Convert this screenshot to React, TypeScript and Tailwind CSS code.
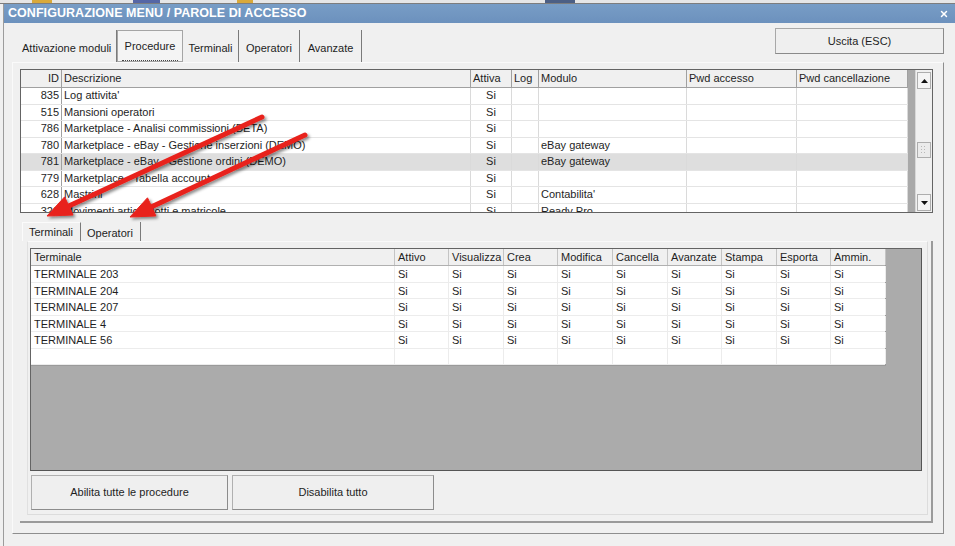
import { X } from 'lucide-react'

const topCols = [
  { label: 'ID', w: 41, align: 'text-right' },
  { label: 'Descrizione', w: 409, align: 'text-left' },
  { label: 'Attiva', w: 41, align: 'text-center' },
  { label: 'Log', w: 27, align: 'text-left' },
  { label: 'Modulo', w: 148, align: 'text-left' },
  { label: 'Pwd accesso', w: 110, align: 'text-left' },
  { label: 'Pwd cancellazione', w: 111, align: 'text-left' },
]

const topRows = [
  ['835', "Log attivita'", 'Si', '', '', '', ''],
  ['515', 'Mansioni operatori', 'Si', '', '', '', ''],
  ['786', 'Marketplace - Analisi commissioni (BETA)', 'Si', '', '', '', ''],
  ['780', 'Marketplace - eBay - Gestione inserzioni (DEMO)', 'Si', '', 'eBay gateway', '', ''],
  ['781', 'Marketplace - eBay - Gestione ordini (DEMO)', 'Si', '', 'eBay gateway', '', ''],
  ['779', 'Marketplace - Tabella account', 'Si', '', '', '', ''],
  ['628', 'Mastrini', 'Si', '', "Contabilita'", '', ''],
  ['320', 'Movimenti articoli lotti e matricole', 'Si', '', 'Ready Pro', '', ''],
]

const permCols = [
  { label: 'Terminale', w: 364 },
  { label: 'Attivo', w: 54 },
  { label: 'Visualizza', w: 55 },
  { label: 'Crea', w: 54 },
  { label: 'Modifica', w: 55 },
  { label: 'Cancella', w: 55 },
  { label: 'Avanzate', w: 54 },
  { label: 'Stampa', w: 55 },
  { label: 'Esporta', w: 54 },
  { label: 'Ammin.', w: 55 },
]

const terminals = ['TERMINALE 203', 'TERMINALE 204', 'TERMINALE 207', 'TERMINALE 4', 'TERMINALE 56', '']

function MainTabs() {
  return (
    <div className="flex h-[32px] mt-[2px] text-[11px] text-[#1e1e1e]">
      <div className="w-[100px] flex items-center pt-[4px] pl-[5px] border-r border-[#7a7a7a]">Attivazione moduli</div>
      <div className="w-[66px] flex items-center justify-center pt-[2px] border border-[#a5a5a5] bg-[#f4f4f4]">
        <div className="px-[3px] py-[5px] border-b border-dotted border-[#444]">Procedure</div>
      </div>
      <div className="w-[56px] flex items-center justify-center pt-[4px] border-r border-[#7a7a7a]">Terminali</div>
      <div className="w-[61px] flex items-center justify-center pt-[4px] border-r border-[#7a7a7a]">Operatori</div>
      <div className="w-[62px] flex items-center justify-center pt-[4px] border-r border-[#7a7a7a]">Avanzate</div>
    </div>
  )
}

function ScrollBar() {
  return (
    <div className="w-[17px] flex flex-col bg-[#f0f0f0] border-l border-[#d8d8d8]">
      <div className="h-[17px] mt-[2px] mx-[1px] border border-[#adadad] bg-[#f4f4f4] flex items-center justify-center">
        <svg width="7" height="4" viewBox="0 0 7 4"><path d="M0 4 L3.5 0 L7 4 Z" fill="#111" /></svg>
      </div>
      <div className="h-[53px]" />
      <div className="h-[16px] mx-[1px] border border-[#adadad] bg-[#ebebeb] flex items-center justify-center">
        <svg width="6" height="8" viewBox="0 0 6 8">
          {[0, 3, 6].map(y => [0, 3].map(x => <rect key={`${x}-${y}`} x={x} y={y} width="1" height="1" fill="#b8b8b8" />))}
        </svg>
      </div>
      <div className="flex-1" />
      <div className="h-[17px] mb-[1px] mx-[1px] border border-[#adadad] bg-[#f4f4f4] flex items-center justify-center">
        <svg width="7" height="4" viewBox="0 0 7 4"><path d="M0 0 L3.5 4 L7 0 Z" fill="#111" /></svg>
      </div>
    </div>
  )
}

function ProcedureGrid() {
  return (
    <div className="h-[144px] flex border border-[#646464] bg-[#a9a9a9] overflow-hidden text-[11px] text-[#1e1e1e]">
      <div className="w-[887px] flex flex-col bg-white">
        <div className="flex h-[18px] bg-[#f0f0f0] border-b border-[#a0a0a0]">
          {topCols.map(c => (
            <div key={c.label} style={{ width: c.w }} className={`shrink-0 px-[2px] leading-[17px] border-r border-[#a0a0a0] ${c.align === 'text-right' ? 'text-right' : 'text-left'}`}>
              {c.label}
            </div>
          ))}
        </div>
        {topRows.map((r, i) => (
          <div key={r[0]} className={`flex h-[16.5px] shrink-0 border-b border-[#e4e4e4] ${i === 4 ? 'bg-[#dedede]' : ''}`}>
            {topCols.map((c, j) => (
              <div key={j} style={{ width: c.w }} className={`shrink-0 px-[2px] leading-[15.5px] whitespace-nowrap overflow-hidden border-r ${j === 0 ? 'border-[#a0a0a0]' : 'border-[#dadada]'} ${c.align === 'text-right' ? 'text-right' : c.align === 'text-center' ? 'text-center' : 'text-left'}`}>
                {r[j]}
              </div>
            ))}
          </div>
        ))}
      </div>
      <div className="w-[7px] bg-[#a9a9a9]" />
      <ScrollBar />
    </div>
  )
}

function PermissionGrid() {
  return (
    <div className="h-[223px] border border-[#646464] border-r-[#555] border-b-[#555] bg-[#ababab] text-[11px] text-[#1e1e1e]">
      <div className="w-[855px] bg-white border-r border-b border-[#9a9a9a]">
        <div className="flex h-[17px] bg-[#f0f0f0] border-b border-[#b0b0b0]">
          {permCols.map(c => (
            <div key={c.label} style={{ width: c.w }} className="shrink-0 px-[3px] leading-[17px] border-r border-[#c4c4c4]">
              {c.label}
            </div>
          ))}
        </div>
        {terminals.map((t, i) => (
          <div key={i} className="flex h-[16.5px] border-b border-[#ececec]">
            {permCols.map((c, j) => (
              <div key={c.label} style={{ width: c.w }} className="shrink-0 px-[3px] leading-[16px] border-r border-[#ececec]">
                {t === '' ? '' : j === 0 ? t : 'Si'}
              </div>
            ))}
          </div>
        ))}
      </div>
    </div>
  )
}

function Arrows() {
  return (
    <svg className="absolute left-0 top-0 pointer-events-none" width="955" height="546" viewBox="0 0 955 546">
      <defs>
        <filter id="sh" x="-20%" y="-20%" width="140%" height="140%">
          <feDropShadow dx="2" dy="2" stdDeviation="1.5" floodColor="#000" floodOpacity="0.45" />
        </filter>
      </defs>
      <g filter="url(#sh)" fill="#e8211b" stroke="#e8211b">
        <line x1="262" y1="117" x2="68.8" y2="206" strokeWidth="5" strokeLinecap="round" />
        <polygon points="47,216 73,215 64.6,196.9" strokeWidth="1" strokeLinejoin="round" />
        <line x1="305" y1="135" x2="151.7" y2="206.8" strokeWidth="5" strokeLinecap="round" />
        <polygon points="130,217 155.9,215.9 147.5,197.8" strokeWidth="1" strokeLinejoin="round" />
      </g>
    </svg>
  )
}

export default function App() {
  return (
    <div className="relative w-[955px] h-[546px] overflow-hidden bg-[#f0f0f0] font-['Liberation_Sans',Arial,sans-serif]">
      <div className="flex h-[4px] bg-[#e6e6e6] border-b border-[#7d7d7d]">
        <div className="w-[32px]" />
        <div className="w-[20px] bg-[#d9a93a]" />
        <div className="w-[81px]" />
        <div className="w-[27px] bg-[#5566a6]" />
        <div className="w-[77px]" />
        <div className="w-[16px] bg-[#d9a93a]" />
        <div className="w-[292px]" />
        <div className="w-[30px] bg-[#4c5f84]" />
      </div>
      <div className="flex h-[542px]">
        <div className="w-[3px] bg-[#f0f0f0]" />
        <div className="flex-1 flex flex-col border-l border-[#9c9c9c]">
          <div className="h-[19px] flex items-center justify-between pl-[4px] pr-[6px] bg-gradient-to-b from-[#789dc6] to-[#6c91bd]">
            <span className="text-white font-bold text-[12.5px] tracking-[0.05px]">CONFIGURAZIONE MENU / PAROLE DI ACCESSO</span>
            <X size={10} strokeWidth={3.5} color="#ffffff" />
          </div>
          <div className="flex items-start pt-[5px] pl-[13px]">
            <MainTabs />
            <button className="ml-auto mr-[11px] w-[169px] h-[26px] border border-[#a8a8a8] border-b-[#8a8a8a] border-r-[#8a8a8a] bg-[#efefef] text-[11px] text-[#1e1e1e]">
              Uscita (ESC)
            </button>
          </div>
          <div className="ml-[8px] mr-[11px] h-[472px] border border-t-[#fafafa] border-l-[#fafafa] border-r-[#8e8e8e] border-b-[#8e8e8e] pt-[6px] pl-[7px] pr-[10px]">
            <ProcedureGrid />
            <div className="flex h-[19px] mt-[9px] ml-[2px] text-[11px] text-[#1e1e1e]">
              <div className="w-[59px] flex items-center pl-[6px] pt-[1px] border-t border-l border-[#fbfbfb] border-r border-r-[#7a7a7a]">Terminali</div>
              <div className="w-[60px] flex items-center pl-[6px] pt-[3px] border-r border-[#7a7a7a]">Operatori</div>
            </div>
            <div className="h-[282px] border-r-2 border-b-2 border-[#9a9a9a]">
              <div className="ml-[7px] mr-[3px] h-[274px] border border-[#dcdcdc] border-t-[#fafafa] border-l-[#e0e0e0] pt-[6px] pl-[2px] pr-[5px]">
                <PermissionGrid />
                <div className="flex mt-[4px] text-[11px] text-[#1e1e1e]">
                  <button className="ml-[1px] w-[197px] h-[35px] border border-[#b0b0b0] border-b-[#8c8c8c] border-r-[#8c8c8c] bg-[#efefef]">Abilita tutte le procedure</button>
                  <button className="ml-[4px] w-[202px] h-[35px] border border-[#b0b0b0] border-b-[#8c8c8c] border-r-[#8c8c8c] bg-[#efefef]">Disabilita tutto</button>
                </div>
              </div>
            </div>
          </div>
        </div>
      </div>
      <Arrows />
    </div>
  )
}
